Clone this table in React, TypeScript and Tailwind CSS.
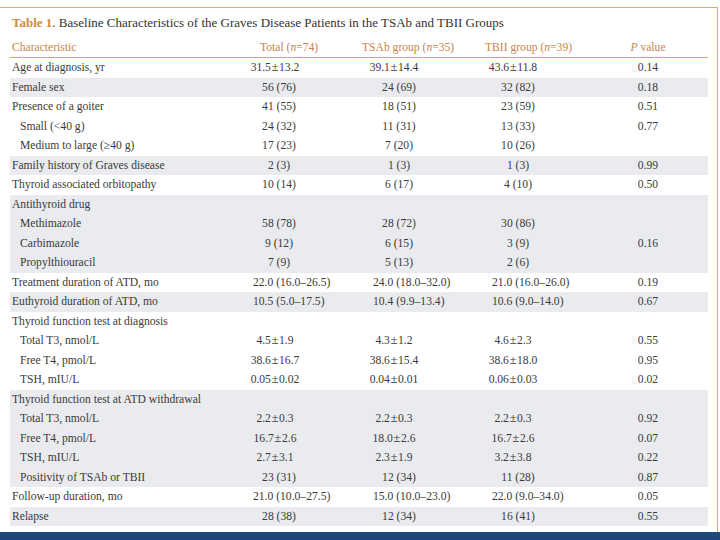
type Row = {
  label: string;
  sub?: boolean;
  gray?: boolean;
  total?: string;
  tsab?: string;
  tbii?: string;
  p?: string;
};

const ROWS: Row[] = [
  { label: "Age at diagnosis, yr", total: "31.5±13.2", tsab: "39.1±14.4", tbii: "43.6±11.8", p: "0.14" },
  { label: "Female sex", total: "56 (76)", tsab: "24 (69)", tbii: "32 (82)", p: "0.18", gray: true },
  { label: "Presence of a goiter", total: "41 (55)", tsab: "18 (51)", tbii: "23 (59)", p: "0.51" },
  { label: "Small (<40 g)", sub: true, total: "24 (32)", tsab: "11 (31)", tbii: "13 (33)", p: "0.77" },
  { label: "Medium to large (≥40 g)", sub: true, total: "17 (23)", tsab: "7 (20)", tbii: "10 (26)" },
  { label: "Family history of Graves disease", total: "2 (3)", tsab: "1 (3)", tbii: "1 (3)", p: "0.99", gray: true },
  { label: "Thyroid associated orbitopathy", total: "10 (14)", tsab: "6 (17)", tbii: "4 (10)", p: "0.50" },
  { label: "Antithyroid drug", gray: true },
  { label: "Methimazole", sub: true, total: "58 (78)", tsab: "28 (72)", tbii: "30 (86)", gray: true },
  { label: "Carbimazole", sub: true, total: "9 (12)", tsab: "6 (15)", tbii: "3 (9)", p: "0.16", gray: true },
  { label: "Propylthiouracil", sub: true, total: "7 (9)", tsab: "5 (13)", tbii: "2 (6)", gray: true },
  { label: "Treatment duration of ATD, mo", total: "22.0 (16.0–26.5)", tsab: "24.0 (18.0–32.0)", tbii: "21.0 (16.0–26.0)", p: "0.19" },
  { label: "Euthyroid duration of ATD, mo", total: "10.5 (5.0–17.5)", tsab: "10.4 (9.9–13.4)", tbii: "10.6 (9.0–14.0)", p: "0.67", gray: true },
  { label: "Thyroid function test at diagnosis" },
  { label: "Total T3, nmol/L", sub: true, total: "4.5±1.9", tsab: "4.3±1.2", tbii: "4.6±2.3", p: "0.55" },
  { label: "Free T4, pmol/L", sub: true, total: "38.6±16.7", tsab: "38.6±15.4", tbii: "38.6±18.0", p: "0.95" },
  { label: "TSH, mIU/L", sub: true, total: "0.05±0.02", tsab: "0.04±0.01", tbii: "0.06±0.03", p: "0.02" },
  { label: "Thyroid function test at ATD withdrawal", gray: true },
  { label: "Total T3, nmol/L", sub: true, total: "2.2±0.3", tsab: "2.2±0.3", tbii: "2.2±0.3", p: "0.92", gray: true },
  { label: "Free T4, pmol/L", sub: true, total: "16.7±2.6", tsab: "18.0±2.6", tbii: "16.7±2.6", p: "0.07", gray: true },
  { label: "TSH, mIU/L", sub: true, total: "2.7±3.1", tsab: "2.3±1.9", tbii: "3.2±3.8", p: "0.22", gray: true },
  { label: "Positivity of TSAb or TBII", sub: true, total: "23 (31)", tsab: "12 (34)", tbii: "11 (28)", p: "0.87", gray: true },
  { label: "Follow-up duration, mo", total: "21.0 (10.0–27.5)", tsab: "15.0 (10.0–23.0)", tbii: "22.0 (9.0–34.0)", p: "0.05" },
  { label: "Relapse", total: "28 (38)", tsab: "12 (34)", tbii: "16 (41)", p: "0.55", gray: true },
];

// counts sit centred, ± values a bit left of that, ranges hang from a fixed left edge
const ALIGN: Record<string, { count: string; pm: string; range: string }> = {
  total: { count: "w-[78px] text-center", pm: "w-[70px] text-center", range: "pl-[13px]" },
  tsab: { count: "w-[78px] text-center", pm: "w-[68px] text-center", range: "pl-[13px]" },
  tbii: { count: "w-[76px] text-center", pm: "w-[66px] text-center", range: "pl-[12px]" },
};

function Val({ v, col }: { v?: string; col: "total" | "tsab" | "tbii" }) {
  if (!v) return <div />;
  const a = ALIGN[col];
  if (v.includes("±")) {
    const [m, sd] = v.split("±");
    return (
      <div className={`whitespace-nowrap ${a.pm}`}>
        {m}
        <span className="text-[13px] leading-none px-[0.5px]">±</span>
        {sd}
      </div>
    );
  }
  const cls = v.includes("–") ? a.range : a.count;
  return <div className={`whitespace-nowrap ${cls}`}>{v}</div>;
}

const GRID = "grid grid-cols-[230px_120px_120px_120px_108px] items-center";

export default function App() {
  return (
    <div
      className="w-[720px] h-[540px] bg-white flex flex-col overflow-hidden"
      style={{ fontFamily: '"Liberation Serif", "Times New Roman", serif' }}
    >
      <div className="mt-[7px] w-[718px] h-[525px] border-t border-r border-[#e2aa6a]">
        <div className="pl-[12px] pt-[7px] h-[23px] leading-[16px] text-[13px] text-[#333] whitespace-nowrap">
          <span className="font-bold text-[#cf8a3c]">Table 1.</span> Baseline Characteristics of the Graves Disease
          Patients in the TSAb and TBII Groups
        </div>
        <div className="ml-[10px] w-[698px] mt-[7px]">
          <div className={`${GRID} h-[20px] border-b border-[#e0a363] text-[11.6px] text-[#c8844c]`}>
            <div className="pl-[2px]">Characteristic</div>
            <div className="pl-[20px] whitespace-nowrap">
              Total (<i>n</i>=74)
            </div>
            <div className="pl-[2px] whitespace-nowrap">
              TSAb group (<i>n</i>=35)
            </div>
            <div className="pl-[5px] whitespace-nowrap">
              TBII group (<i>n</i>=39)
            </div>
            <div className="w-[96px] text-center">
              <i>P</i> value
            </div>
          </div>
          {ROWS.map((r, i) => (
            <div
              key={i}
              className={`${GRID} h-[19.5px] text-[11.6px] text-[#3a3a3a] ${r.gray ? "bg-[#e9ebee]" : ""}`}
            >
              <div className={`whitespace-nowrap ${r.sub ? "pl-[10px]" : "pl-[2px]"}`}>{r.label}</div>
              <Val v={r.total} col="total" />
              <Val v={r.tsab} col="tsab" />
              <Val v={r.tbii} col="tbii" />
              <div className="w-[96px] text-center">{r.p}</div>
            </div>
          ))}
        </div>
      </div>
      <div className="h-[8px] bg-[#1f4878]" />
    </div>
  );
}
